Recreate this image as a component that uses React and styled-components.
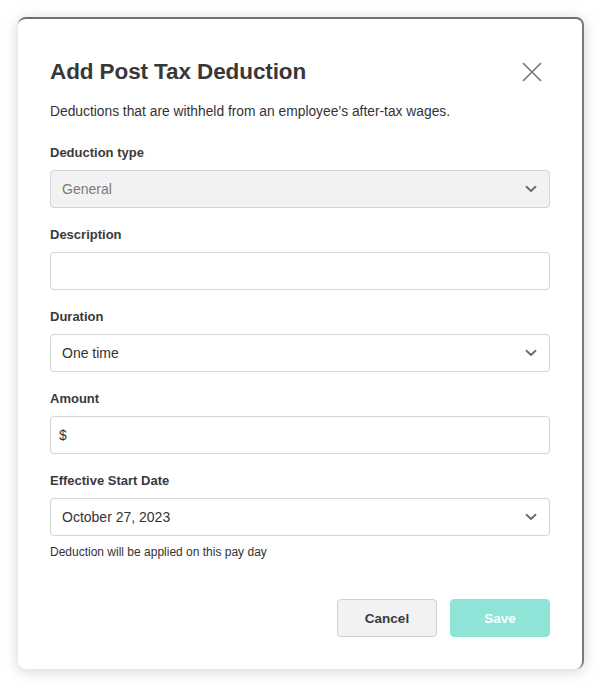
import styled, { createGlobalStyle } from 'styled-components';

const GlobalStyle = createGlobalStyle`
  html, body {
    margin: 0;
    padding: 0;
    background: #ffffff;
    font-family: "Liberation Sans", Arial, sans-serif;
    color: #333333;
  }
`;

function Chevron() {
  return (
    <svg width='12' height='8' viewBox='0 0 12 8' fill='none'>
      <path d='M1.5 1.8L6 6L10.5 1.8' stroke='#6c6c6c' strokeWidth='1.9' strokeLinecap='round' strokeLinejoin='round' />
    </svg>
  );
}

function CloseIcon() {
  return (
    <svg width='20' height='20' viewBox='0 0 20 20' fill='none'>
      <path d='M1 1L19 19M19 1L1 19' stroke='#777' strokeWidth='1.6' />
    </svg>
  );
}

function Field({ label, children }) {
  return (
    <FieldGroup>
      <Label>{label}</Label>
      {children}
    </FieldGroup>
  );
}

export default function App() {
  return (
    <>
      <GlobalStyle />
      <Page>
        <Card>
          <Header>
            <Title>Add Post Tax Deduction</Title>
            <Close>
              <CloseIcon />
            </Close>
          </Header>
          <Subtitle>Deductions that are withheld from an employee’s after-tax wages.</Subtitle>

          <Form>
            <Field label='Deduction type'>
              <InputBox $disabled>
                <Value $muted>General</Value>
                <Chevron />
              </InputBox>
            </Field>
            <Field label='Description'>
              <InputBox />
            </Field>
            <Field label='Duration'>
              <InputBox>
                <Value>One time</Value>
                <Chevron />
              </InputBox>
            </Field>
            <Field label='Amount'>
              <InputBox $tight>
                <Value>$</Value>
              </InputBox>
            </Field>
            <Field label='Effective Start Date'>
              <InputBox>
                <Value>October 27, 2023</Value>
                <Chevron />
              </InputBox>
              <Hint>Deduction will be applied on this pay day</Hint>
            </Field>
          </Form>

          <Footer>
            <Button>Cancel</Button>
            <Button $primary>Save</Button>
          </Footer>
        </Card>
      </Page>
    </>
  );
}

// -------------------------------------------------- styling ----------------------------------------------
const Page = styled.div`
  width: 601px;
  height: 688px;
  box-sizing: border-box;
  padding: 17px 17px 19px 18px;
`;

const Card = styled.div`
  box-sizing: border-box;
  height: 652px;
  background: #ffffff;
  border-radius: 8px;
  border-top: 2px solid #6f6f6f;
  border-right: 2px solid #7a7a7a;
  box-shadow: 0 2px 14px rgba(0, 0, 0, 0.18);
  padding: 35px 32px 32px 32px;
  display: flex;
  flex-direction: column;
`;

const Header = styled.div`
  display: flex;
  align-items: center;
  justify-content: space-between;
  height: 36px;
`;

const Title = styled.h1`
  margin: 0;
  font-size: 22.5px;
  font-weight: 700;
  color: #383838;
  letter-spacing: -0.1px;
`;

const Close = styled.div`
  display: flex;
  margin-right: 8px;
  cursor: pointer;
`;

const Subtitle = styled.p`
  margin: 14px 0 0 0;
  font-size: 13.8px;
  line-height: 16px;
  color: #333;
`;

const Form = styled.div`
  display: flex;
  flex-direction: column;
  gap: 19px;
  margin-top: 25px;
`;

const FieldGroup = styled.div`
  display: flex;
  flex-direction: column;
`;

const Label = styled.div`
  font-size: 13px;
  line-height: 16px;
  font-weight: 700;
  color: #3a3a3a;
  margin-bottom: 9px;
`;

const InputBox = styled.div`
  box-sizing: border-box;
  height: 38px;
  display: flex;
  align-items: center;
  justify-content: space-between;
  padding: 0 12px 0 ${({ $tight }) => ($tight ? '8px' : '11px')};
  border: 1px solid #d4d4d4;
  border-radius: 4px;
  background: ${({ $disabled }) => ($disabled ? '#f2f2f2' : '#ffffff')};
`;

const Value = styled.span`
  font-size: 14px;
  color: ${({ $muted }) => ($muted ? '#7a7a7a' : '#333')};
`;

const Hint = styled.div`
  margin-top: 9px;
  font-size: 12px;
  line-height: 14px;
  color: #333;
`;

const Footer = styled.div`
  margin-top: auto;
  display: flex;
  justify-content: flex-end;
  gap: 13px;
`;

const Button = styled.button`
  box-sizing: border-box;
  width: 100px;
  height: 38px;
  border-radius: 4px;
  font-family: inherit;
  font-size: 13.5px;
  font-weight: 700;
  cursor: pointer;
  border: 1px solid ${({ $primary }) => ($primary ? '#8de4d7' : '#d0d0d0')};
  background: ${({ $primary }) => ($primary ? '#8de4d7' : '#f2f2f2')};
  color: ${({ $primary }) => ($primary ? '#ffffff' : '#3a3a3a')};
`;
